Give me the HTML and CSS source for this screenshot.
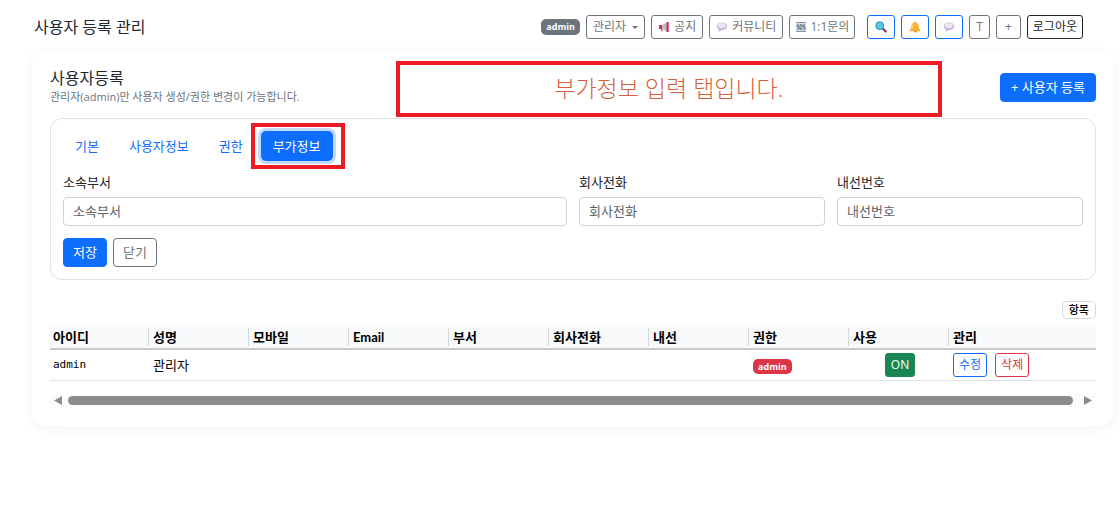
FILE: index.html
```html
<!DOCTYPE html>
<html lang="ko">
<head>
	<meta charset="UTF-8">
	<meta name="viewport" content="width=device-width, initial-scale=1">
	<title>사용자 등록 관리</title>
	<link rel="stylesheet" href="styles.css">
</head>
<body>

	<svg class="defs" aria-hidden="true">
		<symbol id="i-bubble" viewBox="0 0 12 12">
			<path d="M6 1.500C2.900 1.500.8 3.100.8 5.300c0 1.500.8 2.600 2 3.300L2.400 11l2.900-1.800H6c3.100 0 5.200-1.700 5.200-3.900S9.100 1.500 6 1.500z" fill="#c9b8de"/>
			<ellipse cx="5.800" cy="4.600" rx="4" ry="2.500" fill="#ece5f5"/>
		</symbol>
	</svg>

	<header class="topbar">
		<h1>사용자 등록 관리</h1>
		<nav class="tools">
			<span class="badge gray">admin</span>
			<button class="btn sm">관리자 <span class="caret"></span></button>
			<button class="btn sm">
				<svg class="icon" viewBox="0 0 12 12">
					<path d="M1 4h3v4H1z" fill="#e0245e"/>
					<path d="M4 4l5-2.500v9L4 8z" fill="#b9bec6"/>
					<path d="M2.500 8h2l.5 2.500H3.200z" fill="#8d949c"/>
					<path d="M8.500 1h2.200v10H8.500z" fill="#e0245e"/>
				</svg>
				공지
			</button>
			<button class="btn sm"><svg class="icon"><use href="#i-bubble"/></svg> 커뮤니티</button>
			<button class="btn sm tight">
				<svg class="icon" viewBox="0 0 12 12">
					<rect x="1" y="1" width="10" height="10" fill="#cfe0ee"/>
					<path d="M1 1.500h10M1 10.500h10" stroke="#8c959d" fill="none"/>
					<path d="M3.800 3.800H2.100v2h1.700v2.400H2M5 3.800h2v4.400H5zM10 3.800H8.300v2H10v2.400H8.200" stroke="#4f575e" stroke-width=".8" fill="none"/>
				</svg>
				1:1문의
			</button>
			<button class="btn sm blue first" aria-label="검색">
				<svg class="icon" viewBox="0 0 12 12">
					<path d="M7.300 7.300l3.400 3.200" stroke="#7b3f6b" stroke-width="2.200" stroke-linecap="round"/>
					<circle cx="4.700" cy="4.700" r="3.900" fill="#58c6e8" stroke="#2b8fb0"/>
				</svg>
			</button>
			<button class="btn sm blue" aria-label="알림">
				<svg class="icon" viewBox="0 0 12 12">
					<circle cx="6.500" cy="10" r="1.500" fill="#d9822b"/>
					<path d="M6 .5c.7 0 1 .5 1 1C9 2.100 9.700 4 9.800 6c.1 1.500.6 2.300 1.600 3.200v1H.6v-1C1.600 8.300 2.100 7.500 2.200 6 2.300 4 3 2.100 5 1.500c0-.5.3-1 1-1z" fill="#fbb034"/>
					<path d="M4.500 3C3.700 4 3.600 5.700 3.200 8" stroke="#ffd67a" fill="none"/>
				</svg>
			</button>
			<button class="btn sm blue" aria-label="메시지"><svg class="icon"><use href="#i-bubble"/></svg></button>
			<button class="btn sm">T</button>
			<button class="btn sm wide">+</button>
			<button class="btn sm tight dark">로그아웃</button>
		</nav>
	</header>

	<main class="card">
		<div class="card-head">
			<div>
				<h2>사용자등록</h2>
				<p>관리자(admin)만 사용자 생성/권한 변경이 가능합니다.</p>
			</div>
			<button class="btn primary add">+ 사용자 등록</button>
		</div>
		<div class="notice">부가정보 입력 탭입니다.</div>

		<form class="panel">
			<div class="tabs" role="tablist">
				<button type="button" role="tab" class="tab">기본</button>
				<button type="button" role="tab" class="tab">사용자정보</button>
				<button type="button" role="tab" class="tab">권한</button>
				<button type="button" role="tab" class="tab active" aria-selected="true">부가정보</button>
			</div>
			<div class="fields">
				<div class="field">
					<label for="dept">소속부서</label>
					<input id="dept" type="text" placeholder="소속부서">
				</div>
				<div class="field">
					<label for="tel">회사전화</label>
					<input id="tel" type="text" placeholder="회사전화">
				</div>
				<div class="field">
					<label for="ext">내선번호</label>
					<input id="ext" type="text" placeholder="내선번호">
				</div>
			</div>
			<div class="actions">
				<button type="button" class="btn primary">저장</button>
				<button type="button" class="btn">닫기</button>
			</div>
		</form>

		<div class="list-tools">
			<button class="columns">항목</button>
		</div>

		<table class="grid">
			<colgroup>
				<col><col><col><col><col><col><col><col><col><col class="rest">
			</colgroup>
			<thead>
				<tr>
					<th><span>아이디</span></th>
					<th><span>성명</span></th>
					<th><span>모바일</span></th>
					<th><span>Email</span></th>
					<th><span>부서</span></th>
					<th><span>회사전화</span></th>
					<th><span>내선</span></th>
					<th><span>권한</span></th>
					<th><span>사용</span></th>
					<th><span>관리</span></th>
				</tr>
			</thead>
			<tbody>
				<tr>
					<td class="mono">admin</td>
					<td>관리자</td>
					<td></td>
					<td></td>
					<td></td>
					<td></td>
					<td></td>
					<td><span class="badge red">admin</span></td>
					<td class="center"><button class="btn sm tight on">ON</button></td>
					<td>
						<div class="row-actions">
							<button class="btn sm tight blue">수정</button>
							<button class="btn sm tight danger">삭제</button>
						</div>
					</td>
				</tr>
			</tbody>
		</table>

		<div class="scrollbar">
			<svg viewBox="0 0 8 9"><path d="M8 0v9L0 4.500z"/></svg>
			<div class="thumb"></div>
			<svg viewBox="0 0 8 9"><path d="M0 0v9l8-4.500z"/></svg>
		</div>
	</main>

</body>
</html>
```
FILE: styles.css
```css
*{
	box-sizing: border-box;
}

body{
	margin: 0;
	background-color: #fff;
	color: #212529;
	font-family: "Open Sans", "Noto Sans CJK KR", sans-serif;
	font-size: 13px;
	line-height: 20px;
}

button, input{
	font: inherit;
	margin: 0;
}

h1, h2, p{
	margin: 0;
	font-weight: normal;
}

h1, h2{
	font-size: 16px;
	line-height: 20px;
}

.defs{
	display: none;
}

/* top bar */
.topbar{
	display: flex;
	align-items: center;
	justify-content: space-between;
	padding: 15px 37px 12px 34px;
}

.tools{
	display: flex;
	align-items: center;
	gap: 6px;
}

.icon{
	width: 12px;
	height: 12px;
}

.caret{
	border: 3px solid transparent;
	border-top-color: currentColor;
	border-bottom: 0;
	margin-left: 2px;
}

.badge{
	display: inline-block;
	padding: 0 5px;
	border-radius: 5px;
	font-size: 9px;
	font-weight: bold;
	line-height: 16px;
	color: #fff;
}
.badge.gray{
	background-color: #6c757d;
}
.badge.red{
	background-color: #dc3545;
	line-height: 15px;
	vertical-align: middle;
}

/* buttons */
.btn{
	display: inline-flex;
	align-items: center;
	justify-content: center;
	gap: 4px;
	height: 29px;
	padding: 0 9px 2px;
	border: 1px solid #6c757d;
	border-radius: 4px;
	background-color: #fff;
	color: #6c757d;
	white-space: nowrap;
	cursor: pointer;
}
.btn.sm{
	height: 24px;
	padding: 0 6px;
	border-radius: 3px;
	font-size: 12px;
}
.btn.sm.tight{
	gap: 3px;
	padding: 0 5px;
}
.btn.sm.wide{
	padding: 0 8px;
}
.btn.primary{
	border-color: #0d6efd;
	background-color: #0d6efd;
	color: #fff;
}
.btn.add{
	padding: 0 10px;
}
.btn.blue{
	border-color: #0d6efd;
	color: #0d6efd;
}
.tools .btn.blue{
	padding: 0 7px;
}
.btn.first{
	margin-left: 6px;
}
.btn.dark{
	border-color: #212529;
	color: #212529;
}
.btn.danger{
	border-color: #dc3545;
	color: #dc3545;
}
.btn.on{
	border-color: #198754;
	background-color: #198754;
	color: #fff;
}

/* card */
.card{
	position: relative;
	margin: 0 6px 20px 32px;
	padding: 17px 18px 18px;
	border-radius: 14px;
	background-color: #fff;
	box-shadow: 0 2px 12px rgba(0,0,0,0.06);
}

.card-head{
	display: flex;
	align-items: center;
	justify-content: space-between;
	margin-bottom: 12px;
}
.card-head p{
	font-size: 11px;
	line-height: 18px;
	color: #6c757d;
}

/* guide box laid over the card head */
.notice{
	position: absolute;
	top: 10px;
	left: 33.6%;
	width: 50.5%;
	height: 56px;
	border: 4px solid #ed1c24;
	color: #d65f3e;
	font-size: 23px;
	font-weight: 300;
	line-height: 46px;
	text-align: center;
}

.panel{
	padding: 12px;
	border: 1px solid #dee2e6;
	border-radius: 12px;
}

.tabs{
	display: flex;
	gap: 6px;
	margin-bottom: 11px;
}
.tab{
	height: 30px;
	padding: 0 12px;
	border: 0;
	border-radius: 5px;
	background: none;
	color: #0d6efd;
	cursor: pointer;
}
.tab.active{
	position: relative;
	background-color: #0d6efd;
	color: #fff;
	box-shadow: 0 0 0 3px #c2dafe;
}
.tab.active::after{
	content: "";
	position: absolute;
	inset: -8px -12px -8px -10px;
	border: 4px solid #ed1c24;
}

.fields{
	display: grid;
	grid-template-columns: repeat(4, 1fr);
	gap: 12px;
	margin-bottom: 12px;
}
.field:first-child{
	grid-column: span 2;
}
.field label{
	display: block;
	margin-bottom: 5px;
}
.field input{
	display: block;
	width: 100%;
	height: 29px;
	padding: 0 9px 2px;
	border: 1px solid #ced4da;
	border-radius: 4px;
	background-color: #fff;
}
.field input::placeholder{
	color: #5c636a;
}

.actions{
	display: flex;
	gap: 6px;
}

/* list */
.list-tools{
	display: flex;
	justify-content: flex-end;
	padding: 21px 0 6px;
}
.columns{
	height: 18px;
	padding: 0 6px;
	border: 1px solid #d5d7da;
	border-radius: 5px;
	background-color: #fff;
	color: #000;
	font-size: 11px;
	font-weight: 500;
	line-height: 16px;
}

.grid{
	width: 100%;
	table-layout: fixed;
	border-collapse: separate;
	border-spacing: 0;
	color: #000;
}
.grid col{
	width: 100px;
}
.grid .rest{
	width: auto;
}
.grid th{
	height: 25px;
	padding: 0 1px 0 0;
	border-bottom: 2px solid #c8cbce;
	background-color: #f8f9fb;
	font-family: Lato, "Noto Sans CJK KR", sans-serif;
	font-weight: bold;
	line-height: 18px;
	text-align: left;
}
.grid th span{
	display: block;
	padding-left: 3px;
	border-right: 1px solid #d5d7da;
}
.grid th:last-child span{
	border-right: 0;
}
.grid td{
	height: 31px;
	padding: 0 3px;
	border-bottom: 1px solid #dee2e6;
}
.grid .mono{
	font-family: "DejaVu Sans Mono", monospace;
	font-size: 11px;
}
.grid .center{
	text-align: center;
}
.grid .btn{
	vertical-align: middle;
}

.row-actions{
	display: flex;
	gap: 8px;
}

.scrollbar{
	display: flex;
	align-items: center;
	gap: 6px;
	margin-top: 12px;
	height: 15px;
	padding: 0 4px;
	background-color: #fcfcfc;
}
.scrollbar svg{
	width: 8px;
	height: 9px;
	fill: #8b8b8b;
}
.scrollbar .thumb{
	flex: 1;
	height: 9px;
	margin-right: 5px;
	border-radius: 5px;
	background-color: #8b8b8b;
}
```
